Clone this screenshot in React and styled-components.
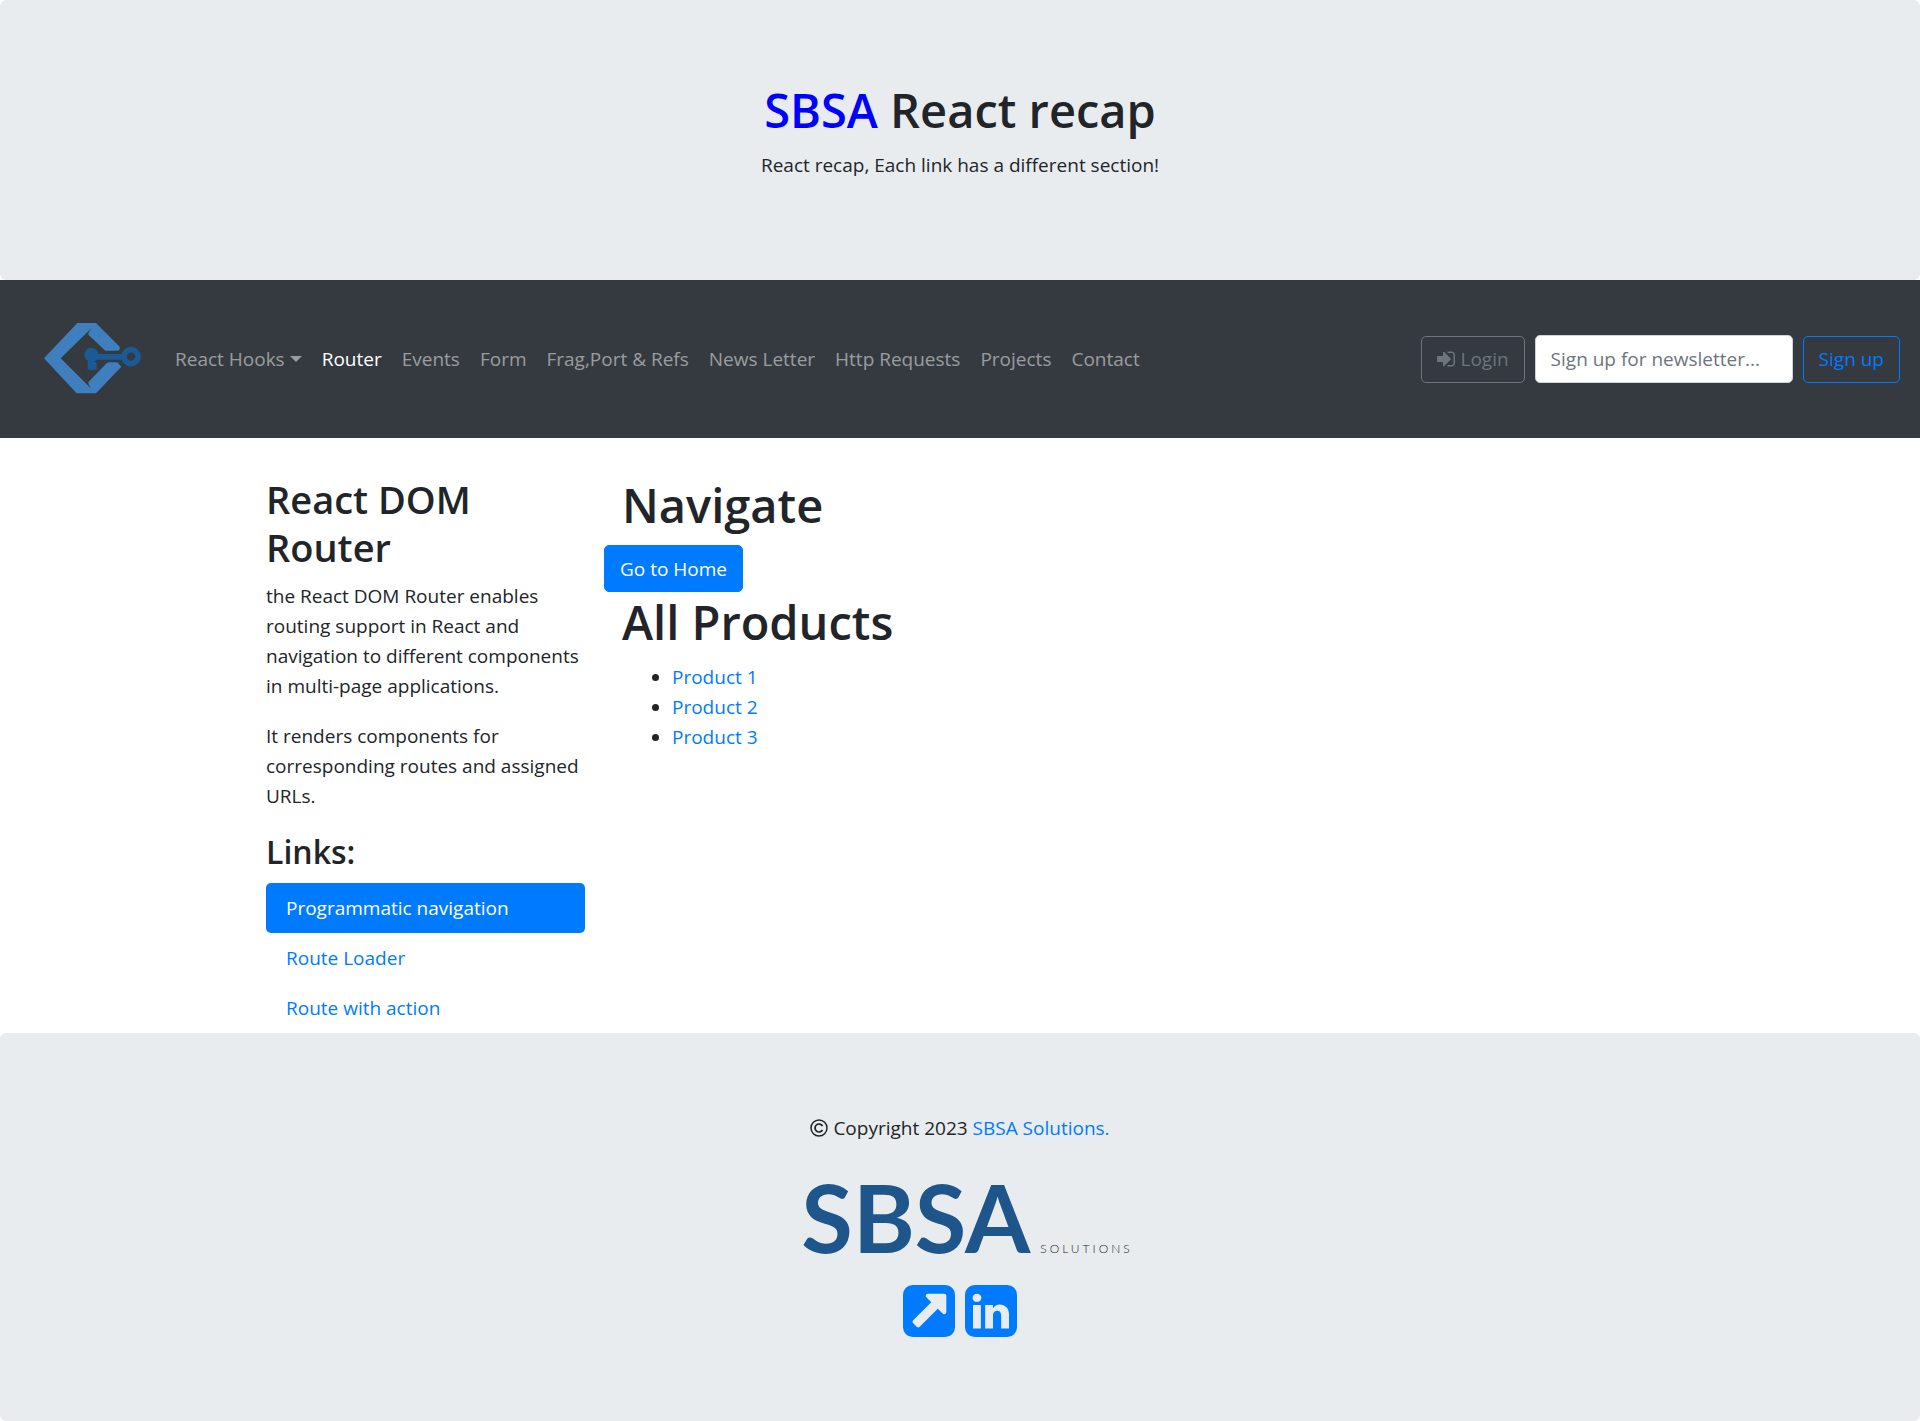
import React from "react";
import styled, { createGlobalStyle } from "styled-components";

const color = {
  text: "#212529",
  link: "#007bff",
  panel: "#e9ecef",
  dark: "#343a40",
  muted: "#6c757d",
};

const GlobalStyle = createGlobalStyle`
  *, *::before, *::after { box-sizing: border-box; }
  body {
    margin: 0;
    background: #fff;
    color: ${color.text};
    font-family: "Segoe UI", "Open Sans", "Noto Sans", sans-serif;
    font-size: 19px;
    line-height: 30px;
  }
  a { color: ${color.link}; text-decoration: none; }
  p { margin: 0 0 20px; }
`;

const Jumbotron = styled.div`
  padding: 80px 40px;
  background: ${color.panel};
  border-radius: 6px;
  text-align: center;
`;

const Title = styled.h1`
  margin: 0 0 10px;
  font-size: 47px;
  font-weight: 600;
  line-height: 60px;
`;

const Brand = styled.span`
  color: blue;
`;

const SubTitle = styled.h2`
  margin: 0 0 10px;
  font-size: 38px;
  font-weight: 600;
  line-height: 48px;
`;

const SmallTitle = styled.h3`
  margin: 0 0 10px;
  font-size: 32px;
  font-weight: 600;
  line-height: 42px;
`;

const Navbar = styled.nav`
  display: flex;
  align-items: center;
  padding: 30px 20px 30px 30px;
  background: ${color.dark};
`;

const LogoLink = styled.a`
  display: block;
  margin-right: 15px;

  svg { display: block; }
`;

const NavList = styled.ul`
  display: flex;
  flex: 1;
  margin: 0;
  padding: 0;
  list-style: none;
`;

const NavLink = styled.a`
  display: flex;
  align-items: center;
  padding: 10px;
  color: ${(p) => (p.$active ? "#fff" : "rgba(255, 255, 255, 0.5)")};
`;

const Caret = styled.span`
  margin-left: 5px;
  border-top: 6px solid;
  border-right: 6px solid transparent;
  border-left: 6px solid transparent;
`;

const NavForm = styled.form`
  display: flex;
  align-items: center;
  gap: 10px;
`;

const Button = styled.button`
  display: inline-flex;
  align-items: center;
  gap: 5px;
  height: 47px;
  padding: 0 15px;
  border: 1px solid ${(p) => p.$tone};
  border-radius: 5px;
  background: ${(p) => (p.$solid ? p.$tone : "transparent")};
  color: ${(p) => (p.$solid ? "#fff" : p.$tone)};
  font: inherit;
`;

const EmailInput = styled.input`
  width: 258px;
  height: 48px;
  padding: 0 15px;
  border: 1px solid #ced4da;
  border-radius: 5px;
  background: #fff;
  font: inherit;

  &::placeholder { color: ${color.muted}; opacity: 1; }
`;

const Content = styled.main`
  display: grid;
  grid-template-columns: 319px 1fr;
  gap: 19px;
  max-width: 1388px;
  margin: 0 auto;
  padding-top: 37px;
`;

const Pills = styled.ul`
  margin: 0;
  padding: 0;
  list-style: none;
`;

const Pill = styled.a`
  display: block;
  padding: 10px 20px;
  border-radius: 5px;
  background: ${(p) => (p.$active ? color.link : "transparent")};
  color: ${(p) => (p.$active ? "#fff" : color.link)};
`;

const Section = styled.section`
  padding-left: 18px;
`;

const Products = styled.ul`
  margin: 0;
  padding-left: 50px;
`;

const FooterLogo = styled.div`
  display: flex;
  justify-content: center;
  align-items: baseline;
  gap: 10px;
  margin: 0 0 14px 14px;
  font-family: Lato, sans-serif;
`;

const LogoName = styled.span`
  color: #1e568c;
  font-size: 94px;
  font-weight: 700;
  line-height: 108px;
`;

const LogoSuffix = styled.span`
  font-size: 12px;
  font-weight: 300;
  line-height: 20px;
  letter-spacing: 3px;
`;

const IconLinks = styled.div`
  display: flex;
  justify-content: center;
  gap: 10px;
  margin-bottom: 4px;

  svg { display: block; }
`;

const Icon = styled.svg`
  width: ${(p) => p.$size}px;
  height: ${(p) => p.$size}px;
  fill: currentColor;
`;

const CopyrightIcon = styled.svg`
  width: 18px;
  height: 18px;
  margin-right: 5px;
  vertical-align: -2px;
  fill: none;
  stroke: currentColor;
`;

const tile =
  "M1536 416v960q0 119-84.500 203.500t-203.500 84.500h-960q-119 0-203.500-84.500t-84.500-203.500v-960q0-119 84.500-203.500t203.500-84.500h960q119 0 203.500 84.500t84.500 203.500z";
const arrowPath =
  "M1280 928v-480q0-26-19-45t-45-19h-480q-42 0-59 39-17 41 14 70l144 144-534 534q-19 19-19 45t19 45l102 102q19 19 45 19t45-19l534-534 144 144q18 19 45 19 12 0 25-5 39-17 39-59z";
const linkedinPath =
  "M237 1414h231v-694h-231v694zM483 506q-1-52-36-86t-93-34-94.500 34-36.500 86q0 51 35.500 85.500t92.500 34.500h1q59 0 95-34.500t36-85.500zM1068 1414h231v-398q0-154-73-233t-193-79q-136 0-209 117h2v-101h-231q3 66 0 694h231v-388q0-38 7-56 15-35 45-59.500t74-24.500q116 0 116 157v371z";
const signInPath =
  "M1184 896q0 26-19 45l-544 544q-19 19-45 19t-45-19-19-45v-288h-448q-26 0-45-19t-19-45v-384q0-26 19-45t45-19h448v-288q0-26 19-45t45-19 45 19l544 544q19 19 19 45zm352-352v704q0 119-84.500 203.500t-203.500 84.500h-320q-13 0-22.500-9.500t-9.500-22.500q0-4-1-20t-.5-26.500 3-23.500 10-19.500 20.500-6.500h320q66 0 113-47t47-113v-704q0-66-47-113t-113-47h-312l-11.500-1-11.500-3-8-5.500-7-9-2-13.500q0-4-1-20t-.5-26.500 3-23.500 10-19.500 20.500-6.500h320q119 0 203.500 84.500t84.500 203.500z";

function FaIcon({ d, size }) {
  return (
    <Icon $size={size} viewBox="0 128 1536 1536" fillRule="evenodd" aria-hidden="true">
      <path d={d} />
    </Icon>
  );
}

function KeyLogo() {
  return (
    <svg width="120" height="98" viewBox="0 0 360 294" aria-hidden="true">
      <path
        fill="#407fbd"
        d="M42 145 142 39H198L269 110Q271 122 262 122H226L175 74Q174 68 184 55L92 145 184 236Q174 224 175 216L230 160Q234 157 240 157H262L274 170 198 250H140Z"
      />
      <path
        fill="#1a5a96"
        d="M173 152A21 21 0 1 1 205 132H276V149H201L192 156H200V179H173Z"
      />
      <circle cx="303" cy="140" r="21" fill="none" stroke="#1a5a96" strokeWidth="17" />
    </svg>
  );
}

const navItems = [
  { label: "React Hooks", menu: true },
  { label: "Router", active: true },
  { label: "Events" },
  { label: "Form" },
  { label: "Frag,Port & Refs" },
  { label: "News Letter" },
  { label: "Http Requests" },
  { label: "Projects" },
  { label: "Contact" },
];

const routeLinks = ["Programmatic navigation", "Route Loader", "Route with action"];
const products = ["Product 1", "Product 2", "Product 3"];

export default function App() {
  return (
    <>
      <GlobalStyle />
      <Jumbotron as="header">
        <Title>
          <Brand>SBSA</Brand> React recap
        </Title>
        <p>React recap, Each link has a different section!</p>
      </Jumbotron>

      <Navbar>
        <LogoLink href="#home" aria-label="Home">
          <KeyLogo />
        </LogoLink>
        <NavList>
          {navItems.map((item) => (
            <li key={item.label}>
              <NavLink href="#nav" $active={item.active}>
                {item.label}
                {item.menu && <Caret />}
              </NavLink>
            </li>
          ))}
        </NavList>
        <NavForm onSubmit={(e) => e.preventDefault()}>
          <Button type="button" $tone={color.muted}>
            <FaIcon d={signInPath} size={18} />
            Login
          </Button>
          <EmailInput
            type="email"
            placeholder="Sign up for newsletter..."
            aria-label="Sign up for newsletter"
          />
          <Button type="submit" $tone={color.link}>
            Sign up
          </Button>
        </NavForm>
      </Navbar>

      <Content>
        <aside>
          <SubTitle>React DOM Router</SubTitle>
          <p>
            the React DOM Router enables routing support in React and navigation to different
            components in multi-page applications.
          </p>
          <p>It renders components for corresponding routes and assigned URLs.</p>
          <SmallTitle>Links:</SmallTitle>
          <Pills>
            {routeLinks.map((label, i) => (
              <li key={label}>
                <Pill href="#route" $active={i === 0}>
                  {label}
                </Pill>
              </li>
            ))}
          </Pills>
        </aside>
        <div>
          <Section>
            <Title>Navigate</Title>
          </Section>
          <Button type="button" $solid $tone={color.link}>
            Go to Home
          </Button>
          <Section>
            <Title>All Products</Title>
            <Products>
              {products.map((name) => (
                <li key={name}>
                  <a href="#product">{name}</a>
                </li>
              ))}
            </Products>
          </Section>
        </div>
      </Content>

      <Jumbotron as="footer">
        <p>
          <CopyrightIcon viewBox="0 0 18 18" role="img" aria-label="Copyright">
            <circle cx="9" cy="9" r="8" strokeWidth="1.5" />
            <path d="M12.500 7A4 4 0 1 0 12.500 11" strokeWidth="1.700" />
          </CopyrightIcon>
          Copyright 2023 <a href="#sbsa">SBSA Solutions.</a>
        </p>
        <FooterLogo>
          <LogoName>SBSA</LogoName>
          <LogoSuffix>SOLUTIONS</LogoSuffix>
        </FooterLogo>
        <IconLinks>
          <a href="#site" aria-label="Website">
            <FaIcon d={arrowPath + tile} size={52} />
          </a>
          <a href="#linkedin" aria-label="LinkedIn">
            <FaIcon d={linkedinPath + tile} size={52} />
          </a>
        </IconLinks>
      </Jumbotron>
    </>
  );
}
